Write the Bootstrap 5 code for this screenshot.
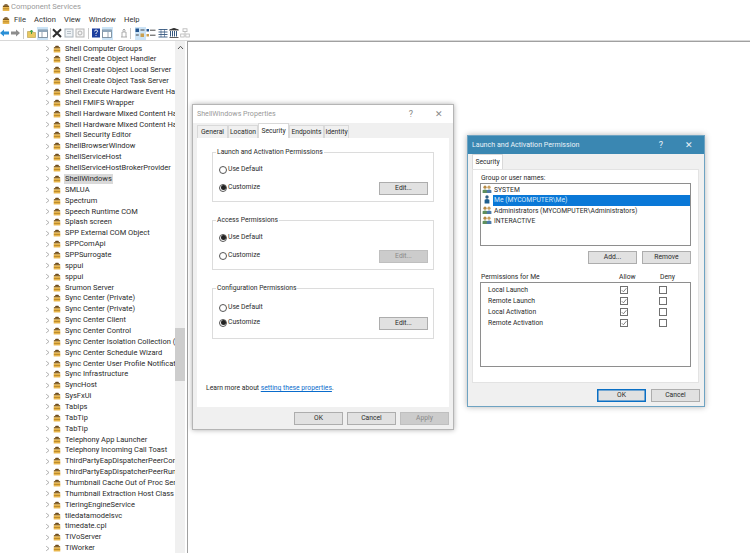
<!DOCTYPE html>
<html lang="en"><head><meta charset="utf-8"><title>Component Services</title>
<link href="https://cdn.jsdelivr.net/npm/bootstrap@5.3.0/dist/css/bootstrap.min.css" rel="stylesheet">
<script src="https://cdn.jsdelivr.net/npm/bootstrap@5.3.0/dist/js/bootstrap.bundle.min.js"></script>
<style>
html,body{height:100%;margin:0}
body{width:750px;height:554px;overflow:hidden;background:#fff;font-family:Roboto,"Noto Sans",sans-serif;color:#222;position:relative}
.titlerow{height:14px;padding:0 0 0 2px;font-size:7.6px;color:#9a9a9a;gap:1px}
.menurow{height:12px;padding:0 0 0 2px;font-size:7.6px;color:#333;gap:0}
.menurow span{margin-right:8.2px}
.toolrow{height:15px;padding-left:0;gap:0;border-bottom:1px solid #d8d8d8;margin-left:-1.5px}
.tool{width:11.2px;height:13px;display:flex;align-items:center;justify-content:center;flex:none}
.tool.on{background:#cce4f7}
.tool.stub{width:5px}
.tsep{width:1px;height:11px;background:#c8c8c8;margin:0 2px;flex:none}
.tsep.s2{margin:0 1px 0 1.500px}
.tsep.s3{margin:0 1.900px 0 2.500px}
.tsep.s4{margin:0 3.400px 0 1px}
.mainarea{height:512px}
.treepane{width:175px;padding-top:2.200px;overflow:hidden;flex:none}
.treerow{height:10.87px;white-space:nowrap;font-size:7.5px;line-height:10.87px;padding-left:44px;color:#2a2a2a;overflow:hidden}
.chev{width:7px;height:7px;flex:none;margin-right:2px}
.pkg{width:8px;height:8px;flex:none;margin-right:3px}
.lbl{padding:0 1px;line-height:10px}
.picked .lbl{background:#d9d9d9}
.sbar{width:10px;background:#f0f0f0;flex:none;display:flex;flex-direction:column}
.sup{height:13px;display:flex;align-items:center;justify-content:center}
.strack{height:274px}
.sthumb{height:53px;background:#cdcdcd}
.gapcol{width:2px;background:#fff;flex:none}
.rightpane{flex:1;border-left:1px solid #a0a0a0;border-top:1px solid #a0a0a0}
.dlg{position:absolute;background:#f0f0f0;font-size:6.75px;color:#2a2a2a;box-shadow:0 0 5px rgba(0,0,0,.32)}
.dlg1{left:192px;top:104px;width:262px;height:326px;border:1px solid #b5b5b5}
.dlg1head{height:18px;background:#fff;color:#999;padding:0 0 0 4px;font-size:7.1px}
.dlgctl{color:#888;font-size:9px;width:28px;text-align:center;line-height:1}
.tabstrip{padding:0 0 0 4px;height:15px;background:#f0f0f0;align-items:flex-end}
.wtab{height:13px;background:#f0f0f0;border:1px solid #d9d9d9;border-bottom:0;line-height:13px;white-space:nowrap;text-align:center;flex:none}
.wtab.cur{background:#fff;height:15px;line-height:14px;position:relative;z-index:1}
.w31{width:31px}.w30{width:30px}.w35{width:35px}.w25{width:25px}
.panel1{margin:0 4px;background:#fff;height:269px;padding:14px 15px 0 15px;position:relative}
.gbox{border:1px solid #dcdcdc;position:relative;padding:0 5px 0 6px}
.gbox>.glegend{position:absolute;left:3px;top:-5px;background:#fff;padding:0 1px;line-height:9px;white-space:nowrap}
.g1{height:50px;margin-bottom:18px;padding-top:12px}
.g2{height:50px;margin-bottom:18px;padding-top:12px}
.g3{height:51px;padding-top:14px}
.choice{height:9px;display:flex;align-items:center;gap:1px;line-height:9px;white-space:nowrap}
.choice+.choice{margin-top:9px}
.g3 .choice+.choice{margin-top:6px}
.rdo{width:8px;height:8px;border-radius:50%;border:1px solid #555;background:#fff;flex:none;display:flex;align-items:center;justify-content:center}
.rdo.set::after{content:"";width:5px;height:5px;border-radius:50%;background:#222}
.wbtn{width:49px;height:13px;background:#e1e1e1;border:1px solid #adadad;font-size:6.75px;color:#2a2a2a;line-height:11px;text-align:center;padding:0;border-radius:0;flex:none}
.wbtn.off{background:#ccc;border-color:#bfbfbf;color:#8a8a8a}
.wbtn.main{border-color:#0a6fc4;box-shadow:inset 0 0 0 .5px #0a6fc4}
.editpos{position:absolute;right:5px}
.g1 .editpos{top:29px}
.g2 .editpos{top:29px}
.g3 .editpos{top:28px}
.learn{position:absolute;left:9px;top:245px;white-space:nowrap}
.learn a{color:#0a6ccc}
.btnrow1{height:35px;padding:5px 4px 0 0;justify-content:flex-end;gap:4px}
.dlg2{left:467px;top:135px;width:238px;height:272px;border:1px solid #6ea3c2;box-shadow:0 0 6px rgba(0,0,0,.3)}
.dlg2head{height:18px;background:#3a87b2;color:#eaf3f8;padding:0 1px 0 4px;font-size:7.1px}
.dlg2head .dlgctl{color:#eaf3f8}
.tabstrip2{height:15px;padding-left:4px;align-items:flex-end}
.panel2{margin:0 5px 0 4px;background:#fff;height:214px;border:1px solid #e3e3e3;padding:4px 7px 0 7px}
.lab{line-height:9px;white-space:nowrap;padding-left:1px}
.ubox{height:63px;border:1px solid #8e8e8e;padding:1px 0 0 1px;background:#fff}
.urow{height:10.4px;line-height:10px;gap:1px;white-space:nowrap}
.urow .uic{width:10px;height:9px;flex:none}
.utext{flex:1;padding-left:1px;line-height:10.4px}
.urow.sel .utext{background:#0a78d7;color:#d8e9f8}
.ubtns{justify-content:flex-end;gap:5px;margin-top:5px;height:13px}
.phead{margin-top:9px;display:flex;height:9px;line-height:9px;padding-left:1px}
.pcol1{width:138px}
.pcol2{width:41px}
.pbox{height:85px;border:1px solid #8e8e8e;padding:2px 0 0 7px}
.prow{height:10.9px;display:flex;align-items:center;line-height:10.9px}
.prow .pname{width:132px;flex:none}
.cbx{width:8px;height:8px;border:1px solid #707070;flex:none;display:block;background:#fff}
.tickbox{width:8px;height:8px;flex:none;display:block}
.gapcbx{width:31px;flex:none}
.btnrow2{height:39px;padding:6px 4px 0 0;justify-content:flex-end;gap:5px}
</style></head>
<body>
<svg width="0" height="0" class="position-absolute"><defs>
<symbol id="pk" viewBox="0 0 9 9"><path d="M3 .8h3l1 1.6H2z" fill="#6b4a1c"/><rect x="1" y="2.4" width="7" height="1.6" fill="#7a5518"/><rect x=".8" y="4" width="7.4" height="4.4" fill="#e8b54a"/><rect x="1" y="5.6" width="7" height=".8" fill="#a97a20"/></symbol>
<symbol id="cv" viewBox="0 0 7 7"><path d="M2.2 1.2 5 3.500 2.200 5.800" fill="none" stroke="#a6a6a6" stroke-width=".9"/></symbol>
<symbol id="ugroup" viewBox="0 0 10 9"><circle cx="3" cy="2.2" r="1.6" fill="#b58a45"/><path d="M.6 8V5.2q2.4-1.6 4.8 0V8z" fill="#5f8f5d"/><circle cx="7" cy="2.2" r="1.6" fill="#c9a060"/><path d="M4.8 8V5.2q2.2-1.6 4.6 0V8z" fill="#4d7aa8"/></symbol>
<symbol id="uone" viewBox="0 0 10 9"><circle cx="5" cy="2" r="1.7" fill="#2d5f86"/><path d="M2.6 8.600V4.800q2.400-1.400 4.800 0v3.800z" fill="#1f5f8f"/></symbol>
<symbol id="tick" viewBox="0 0 8 8"><rect x=".5" y=".5" width="7" height="7" fill="#fff" stroke="#707070"/><path d="M1.800 4.200 3.400 5.800 6.400 2.200" fill="none" stroke="#666" stroke-width=".8"/></symbol>
</defs></svg>

<div class="titlerow d-flex align-items-center"><svg width="8" height="9" viewBox="0 0 9 9"><use href="#pk"/></svg><span>Component Services</span></div>
<div class="menurow d-flex align-items-center"><svg width="8" height="9" viewBox="0 0 9 9" class="me-1 flex-none"><use href="#pk"/></svg><span>File</span><span>Action</span><span>View</span><span>Window</span><span>Help</span></div>
<div class="toolrow d-flex align-items-center">
<div class="tool"><svg width="9" height="8" viewBox="0 0 9 8"><path d="M0 4 4 .5V2.600H9V5.400H4V7.500z" fill="#2b8fd6"/></svg></div>
<div class="tool"><svg width="9" height="8" viewBox="0 0 9 8"><path d="M9 4 5 .5V2.600H0V5.400H5V7.500z" fill="#8d8d8d"/></svg></div>
<div class="tsep"></div>
<div class="tool"><svg width="9" height="9" viewBox="0 0 9 9"><path d="M.5 2.500h3l1 1h4V8.500H.5z" fill="#e8c860" stroke="#a88c30" stroke-width=".5"/><path d="M4.500 5V1.500M3 3 4.500 1 6 3" fill="none" stroke="#2f9a3d" stroke-width=".9"/></svg></div>
<div class="tool on"><svg width="10" height="9" viewBox="0 0 10 9"><rect x=".5" y="1" width="9" height="7.500" fill="#fff" stroke="#6d7f8f" stroke-width=".8"/><rect x=".5" y="1" width="9" height="2" fill="#8fa6ba"/><path d="M4 3v5.500" stroke="#6d7f8f" stroke-width=".7"/></svg></div>
<div class="tsep s2"></div>
<div class="tool"><svg width="10" height="10" viewBox="0 0 10 10"><path d="M1 1.200 9 9M9 1.200 1 9" stroke="#2e2e2e" stroke-width="2"/></svg></div>
<div class="tool"><svg width="10" height="10" viewBox="0 0 10 10"><rect x="1" y="1" width="8" height="8" fill="#eef2f5" stroke="#a9b3bb"/><path d="M3 3.500h4M3 5.500h4" stroke="#a9b3bb" stroke-width=".8"/></svg></div>
<div class="tool"><svg width="10" height="10" viewBox="0 0 10 10"><rect x="1" y="1" width="8" height="8" fill="#f4f4f4" stroke="#b5b5b5"/><circle cx="5" cy="5" r="2" fill="none" stroke="#b5b5b5"/></svg></div>
<div class="tsep s3"></div>
<div class="tool"><svg width="10" height="10" viewBox="0 0 10 10"><rect x="1" y=".5" width="8" height="9" fill="#1d3f9e"/><path d="M3.600 3.400q0-1.400 1.500-1.400t1.400 1.300Q6.500 4.200 5.400 4.800 5 5 5 6M5 7v1" fill="none" stroke="#fff" stroke-width=".9"/></svg></div>
<div class="tool on"><svg width="10" height="9" viewBox="0 0 10 9"><rect x=".5" y="1" width="9" height="7.500" fill="#fff" stroke="#6d7f8f" stroke-width=".8"/><rect x=".5" y="1" width="9" height="2" fill="#8fa6ba"/><path d="M6 3v5.500" stroke="#6d7f8f" stroke-width=".7"/></svg></div>
<div class="tool stub"></div>
<div class="tool"><svg width="10" height="10" viewBox="0 0 10 10"><path d="M2 9h6M3 9V4h4v5M5 1v3M3.500 2.500 5 1l1.500 1.500" fill="none" stroke="#9a9a9a" stroke-width=".8"/></svg></div>
<div class="tsep s4"></div>
<div class="tool on"><svg width="10" height="10" viewBox="0 0 10 10"><rect x=".5" y=".5" width="3.500" height="3.500" fill="#23558f"/><path d="M5.500 2h4M.8 7h3" stroke="#333" stroke-width=".9"/><rect x="5.500" y="5.500" width="3.500" height="3.500" fill="#c9a050"/></svg></div>
<div class="tool"><svg width="10" height="10" viewBox="0 0 10 10"><rect x=".5" y="1" width="2.500" height="2.500" fill="#23558f"/><path d="M4 2.200h5.500M4 7.200h5.500" stroke="#333" stroke-width=".9"/><rect x=".5" y="6" width="2.500" height="2.500" fill="#c9a050"/></svg></div>
<div class="tool"><svg width="10" height="10" viewBox="0 0 10 10"><path d="M.5 1.500h9M.5 4h9M.5 6.500h9M.5 9h9" stroke="#35587f" stroke-width=".9"/><path d="M3 1v8M6.500 1v8" stroke="#35587f" stroke-width=".6"/></svg></div>
<div class="tool"><svg width="10" height="10" viewBox="0 0 10 10"><path d="M.5 2 5 .3 9.500 2zM.5 9.500h9" fill="#333" stroke="#333" stroke-width=".8"/><path d="M1.500 3v5.500M3.500 3v5.500M5.500 3v5.500M7.500 3v5.500" stroke="#35587f" stroke-width="1"/></svg></div>
<div class="tool"><svg width="10" height="10" viewBox="0 0 10 10"><rect x="3" y=".8" width="4" height="2.800" fill="none" stroke="#b5b5b5" stroke-width=".8"/><rect x=".7" y="6" width="3.500" height="3" fill="none" stroke="#b5b5b5" stroke-width=".8"/><rect x="5.800" y="6" width="3.500" height="3" fill="none" stroke="#b5b5b5" stroke-width=".8"/><path d="M5 3.600V6" stroke="#b5b5b5" stroke-width=".8"/></svg></div>
</div>

<div class="mainarea d-flex">
<div class="treepane" id="tree">
<div class="treerow d-flex align-items-center"><svg class="chev"><use href="#cv"/></svg><svg class="pkg"><use href="#pk"/></svg><span class="lbl">Shell Computer Groups</span></div>
<div class="treerow d-flex align-items-center"><svg class="chev"><use href="#cv"/></svg><svg class="pkg"><use href="#pk"/></svg><span class="lbl">Shell Create Object Handler</span></div>
<div class="treerow d-flex align-items-center"><svg class="chev"><use href="#cv"/></svg><svg class="pkg"><use href="#pk"/></svg><span class="lbl">Shell Create Object Local Server</span></div>
<div class="treerow d-flex align-items-center"><svg class="chev"><use href="#cv"/></svg><svg class="pkg"><use href="#pk"/></svg><span class="lbl">Shell Create Object Task Server</span></div>
<div class="treerow d-flex align-items-center"><svg class="chev"><use href="#cv"/></svg><svg class="pkg"><use href="#pk"/></svg><span class="lbl">Shell Execute Hardware Event Har</span></div>
<div class="treerow d-flex align-items-center"><svg class="chev"><use href="#cv"/></svg><svg class="pkg"><use href="#pk"/></svg><span class="lbl">Shell FMIFS Wrapper</span></div>
<div class="treerow d-flex align-items-center"><svg class="chev"><use href="#cv"/></svg><svg class="pkg"><use href="#pk"/></svg><span class="lbl">Shell Hardware Mixed Content Ha</span></div>
<div class="treerow d-flex align-items-center"><svg class="chev"><use href="#cv"/></svg><svg class="pkg"><use href="#pk"/></svg><span class="lbl">Shell Hardware Mixed Content Ha</span></div>
<div class="treerow d-flex align-items-center"><svg class="chev"><use href="#cv"/></svg><svg class="pkg"><use href="#pk"/></svg><span class="lbl">Shell Security Editor</span></div>
<div class="treerow d-flex align-items-center"><svg class="chev"><use href="#cv"/></svg><svg class="pkg"><use href="#pk"/></svg><span class="lbl">ShellBrowserWindow</span></div>
<div class="treerow d-flex align-items-center"><svg class="chev"><use href="#cv"/></svg><svg class="pkg"><use href="#pk"/></svg><span class="lbl">ShellServiceHost</span></div>
<div class="treerow d-flex align-items-center"><svg class="chev"><use href="#cv"/></svg><svg class="pkg"><use href="#pk"/></svg><span class="lbl">ShellServiceHostBrokerProvider</span></div>
<div class="treerow picked d-flex align-items-center"><svg class="chev"><use href="#cv"/></svg><svg class="pkg"><use href="#pk"/></svg><span class="lbl">ShellWindows</span></div>
<div class="treerow d-flex align-items-center"><svg class="chev"><use href="#cv"/></svg><svg class="pkg"><use href="#pk"/></svg><span class="lbl">SMLUA</span></div>
<div class="treerow d-flex align-items-center"><svg class="chev"><use href="#cv"/></svg><svg class="pkg"><use href="#pk"/></svg><span class="lbl">Spectrum</span></div>
<div class="treerow d-flex align-items-center"><svg class="chev"><use href="#cv"/></svg><svg class="pkg"><use href="#pk"/></svg><span class="lbl">Speech Runtime COM</span></div>
<div class="treerow d-flex align-items-center"><svg class="chev"><use href="#cv"/></svg><svg class="pkg"><use href="#pk"/></svg><span class="lbl">Splash screen</span></div>
<div class="treerow d-flex align-items-center"><svg class="chev"><use href="#cv"/></svg><svg class="pkg"><use href="#pk"/></svg><span class="lbl">SPP External COM Object</span></div>
<div class="treerow d-flex align-items-center"><svg class="chev"><use href="#cv"/></svg><svg class="pkg"><use href="#pk"/></svg><span class="lbl">SPPComApi</span></div>
<div class="treerow d-flex align-items-center"><svg class="chev"><use href="#cv"/></svg><svg class="pkg"><use href="#pk"/></svg><span class="lbl">SPPSurrogate</span></div>
<div class="treerow d-flex align-items-center"><svg class="chev"><use href="#cv"/></svg><svg class="pkg"><use href="#pk"/></svg><span class="lbl">sppui</span></div>
<div class="treerow d-flex align-items-center"><svg class="chev"><use href="#cv"/></svg><svg class="pkg"><use href="#pk"/></svg><span class="lbl">sppui</span></div>
<div class="treerow d-flex align-items-center"><svg class="chev"><use href="#cv"/></svg><svg class="pkg"><use href="#pk"/></svg><span class="lbl">Srumon Server</span></div>
<div class="treerow d-flex align-items-center"><svg class="chev"><use href="#cv"/></svg><svg class="pkg"><use href="#pk"/></svg><span class="lbl">Sync Center (Private)</span></div>
<div class="treerow d-flex align-items-center"><svg class="chev"><use href="#cv"/></svg><svg class="pkg"><use href="#pk"/></svg><span class="lbl">Sync Center (Private)</span></div>
<div class="treerow d-flex align-items-center"><svg class="chev"><use href="#cv"/></svg><svg class="pkg"><use href="#pk"/></svg><span class="lbl">Sync Center Client</span></div>
<div class="treerow d-flex align-items-center"><svg class="chev"><use href="#cv"/></svg><svg class="pkg"><use href="#pk"/></svg><span class="lbl">Sync Center Control</span></div>
<div class="treerow d-flex align-items-center"><svg class="chev"><use href="#cv"/></svg><svg class="pkg"><use href="#pk"/></svg><span class="lbl">Sync Center Isolation Collection (F</span></div>
<div class="treerow d-flex align-items-center"><svg class="chev"><use href="#cv"/></svg><svg class="pkg"><use href="#pk"/></svg><span class="lbl">Sync Center Schedule Wizard</span></div>
<div class="treerow d-flex align-items-center"><svg class="chev"><use href="#cv"/></svg><svg class="pkg"><use href="#pk"/></svg><span class="lbl">Sync Center User Profile Notificati</span></div>
<div class="treerow d-flex align-items-center"><svg class="chev"><use href="#cv"/></svg><svg class="pkg"><use href="#pk"/></svg><span class="lbl">Sync Infrastructure</span></div>
<div class="treerow d-flex align-items-center"><svg class="chev"><use href="#cv"/></svg><svg class="pkg"><use href="#pk"/></svg><span class="lbl">SyncHost</span></div>
<div class="treerow d-flex align-items-center"><svg class="chev"><use href="#cv"/></svg><svg class="pkg"><use href="#pk"/></svg><span class="lbl">SysFxUi</span></div>
<div class="treerow d-flex align-items-center"><svg class="chev"><use href="#cv"/></svg><svg class="pkg"><use href="#pk"/></svg><span class="lbl">TabIps</span></div>
<div class="treerow d-flex align-items-center"><svg class="chev"><use href="#cv"/></svg><svg class="pkg"><use href="#pk"/></svg><span class="lbl">TabTip</span></div>
<div class="treerow d-flex align-items-center"><svg class="chev"><use href="#cv"/></svg><svg class="pkg"><use href="#pk"/></svg><span class="lbl">TabTip</span></div>
<div class="treerow d-flex align-items-center"><svg class="chev"><use href="#cv"/></svg><svg class="pkg"><use href="#pk"/></svg><span class="lbl">Telephony App Launcher</span></div>
<div class="treerow d-flex align-items-center"><svg class="chev"><use href="#cv"/></svg><svg class="pkg"><use href="#pk"/></svg><span class="lbl">Telephony Incoming Call Toast</span></div>
<div class="treerow d-flex align-items-center"><svg class="chev"><use href="#cv"/></svg><svg class="pkg"><use href="#pk"/></svg><span class="lbl">ThirdPartyEapDispatcherPeerConf</span></div>
<div class="treerow d-flex align-items-center"><svg class="chev"><use href="#cv"/></svg><svg class="pkg"><use href="#pk"/></svg><span class="lbl">ThirdPartyEapDispatcherPeerRunti</span></div>
<div class="treerow d-flex align-items-center"><svg class="chev"><use href="#cv"/></svg><svg class="pkg"><use href="#pk"/></svg><span class="lbl">Thumbnail Cache Out of Proc Serv</span></div>
<div class="treerow d-flex align-items-center"><svg class="chev"><use href="#cv"/></svg><svg class="pkg"><use href="#pk"/></svg><span class="lbl">Thumbnail Extraction Host Class</span></div>
<div class="treerow d-flex align-items-center"><svg class="chev"><use href="#cv"/></svg><svg class="pkg"><use href="#pk"/></svg><span class="lbl">TieringEngineService</span></div>
<div class="treerow d-flex align-items-center"><svg class="chev"><use href="#cv"/></svg><svg class="pkg"><use href="#pk"/></svg><span class="lbl">tiledatamodelsvc</span></div>
<div class="treerow d-flex align-items-center"><svg class="chev"><use href="#cv"/></svg><svg class="pkg"><use href="#pk"/></svg><span class="lbl">timedate.cpl</span></div>
<div class="treerow d-flex align-items-center"><svg class="chev"><use href="#cv"/></svg><svg class="pkg"><use href="#pk"/></svg><span class="lbl">TiVoServer</span></div>
<div class="treerow d-flex align-items-center"><svg class="chev"><use href="#cv"/></svg><svg class="pkg"><use href="#pk"/></svg><span class="lbl">TiWorker</span></div>
</div>
<div class="sbar"><div class="sup"><svg width="7" height="5" viewBox="0 0 7 5"><path d="M1 4 3.500 1.300 6 4" fill="none" stroke="#555" stroke-width="1"/></svg></div><div class="strack"></div><div class="sthumb"></div></div>
<div class="gapcol"></div>
<div class="rightpane"></div>
</div>

<div class="dlg dlg1">
 <div class="dlg1head d-flex align-items-center"><span class="flex-grow-1">ShellWindows Properties</span><span class="dlgctl">?</span><span class="dlgctl">✕</span></div>
 <div class="tabstrip d-flex"><div class="wtab w31">General</div><div class="wtab w30">Location</div><div class="wtab cur w31">Security</div><div class="wtab w35">Endpoints</div><div class="wtab w25">Identity</div></div>
 <div class="panel1">
  <div class="gbox g1"><div class="glegend">Launch and Activation Permissions</div>
   <div class="choice"><span class="rdo"></span>Use Default</div><div class="choice"><span class="rdo set"></span>Customize</div>
   <button class="wbtn editpos">Edit...</button></div>
  <div class="gbox g2"><div class="glegend">Access Permissions</div>
   <div class="choice"><span class="rdo set"></span>Use Default</div><div class="choice"><span class="rdo"></span>Customize</div>
   <button class="wbtn off editpos">Edit...</button></div>
  <div class="gbox g3"><div class="glegend">Configuration Permissions</div>
   <div class="choice"><span class="rdo"></span>Use Default</div><div class="choice"><span class="rdo set"></span>Customize</div>
   <button class="wbtn editpos">Edit...</button></div>
  <div class="learn">Learn more about <a href="#">setting these properties</a>.</div>
 </div>
 <div class="btnrow1 d-flex"><button class="wbtn">OK</button><button class="wbtn">Cancel</button><button class="wbtn off">Apply</button></div>
</div>

<div class="dlg dlg2">
 <div class="dlg2head d-flex align-items-center"><span class="flex-grow-1">Launch and Activation Permission</span><span class="dlgctl">?</span><span class="dlgctl">✕</span></div>
 <div class="tabstrip2 d-flex"><div class="wtab cur w31">Security</div></div>
 <div class="panel2">
  <div class="lab">Group or user names:</div>
  <div class="ubox">
   <div class="urow d-flex"><svg class="uic"><use href="#ugroup"/></svg><span class="utext">SYSTEM</span></div>
   <div class="urow sel d-flex"><svg class="uic"><use href="#uone"/></svg><span class="utext">Me (MYCOMPUTER\Me)</span></div>
   <div class="urow d-flex"><svg class="uic"><use href="#ugroup"/></svg><span class="utext">Administrators (MYCOMPUTER\Administrators)</span></div>
   <div class="urow d-flex"><svg class="uic"><use href="#ugroup"/></svg><span class="utext">INTERACTIVE</span></div>
  </div>
  <div class="ubtns d-flex"><button class="wbtn">Add...</button><button class="wbtn">Remove</button></div>
  <div class="phead"><span class="pcol1">Permissions for Me</span><span class="pcol2">Allow</span><span>Deny</span></div>
  <div class="pbox">
   <div class="prow"><span class="pname">Local Launch</span><svg class="tickbox" viewBox="0 0 8 8"><use href="#tick"/></svg><span class="gapcbx"></span><span class="cbx"></span></div>
   <div class="prow"><span class="pname">Remote Launch</span><svg class="tickbox" viewBox="0 0 8 8"><use href="#tick"/></svg><span class="gapcbx"></span><span class="cbx"></span></div>
   <div class="prow"><span class="pname">Local Activation</span><svg class="tickbox" viewBox="0 0 8 8"><use href="#tick"/></svg><span class="gapcbx"></span><span class="cbx"></span></div>
   <div class="prow"><span class="pname">Remote Activation</span><svg class="tickbox" viewBox="0 0 8 8"><use href="#tick"/></svg><span class="gapcbx"></span><span class="cbx"></span></div>
  </div>
 </div>
 <div class="btnrow2 d-flex"><button class="wbtn main">OK</button><button class="wbtn">Cancel</button></div>
</div>
</body></html>
